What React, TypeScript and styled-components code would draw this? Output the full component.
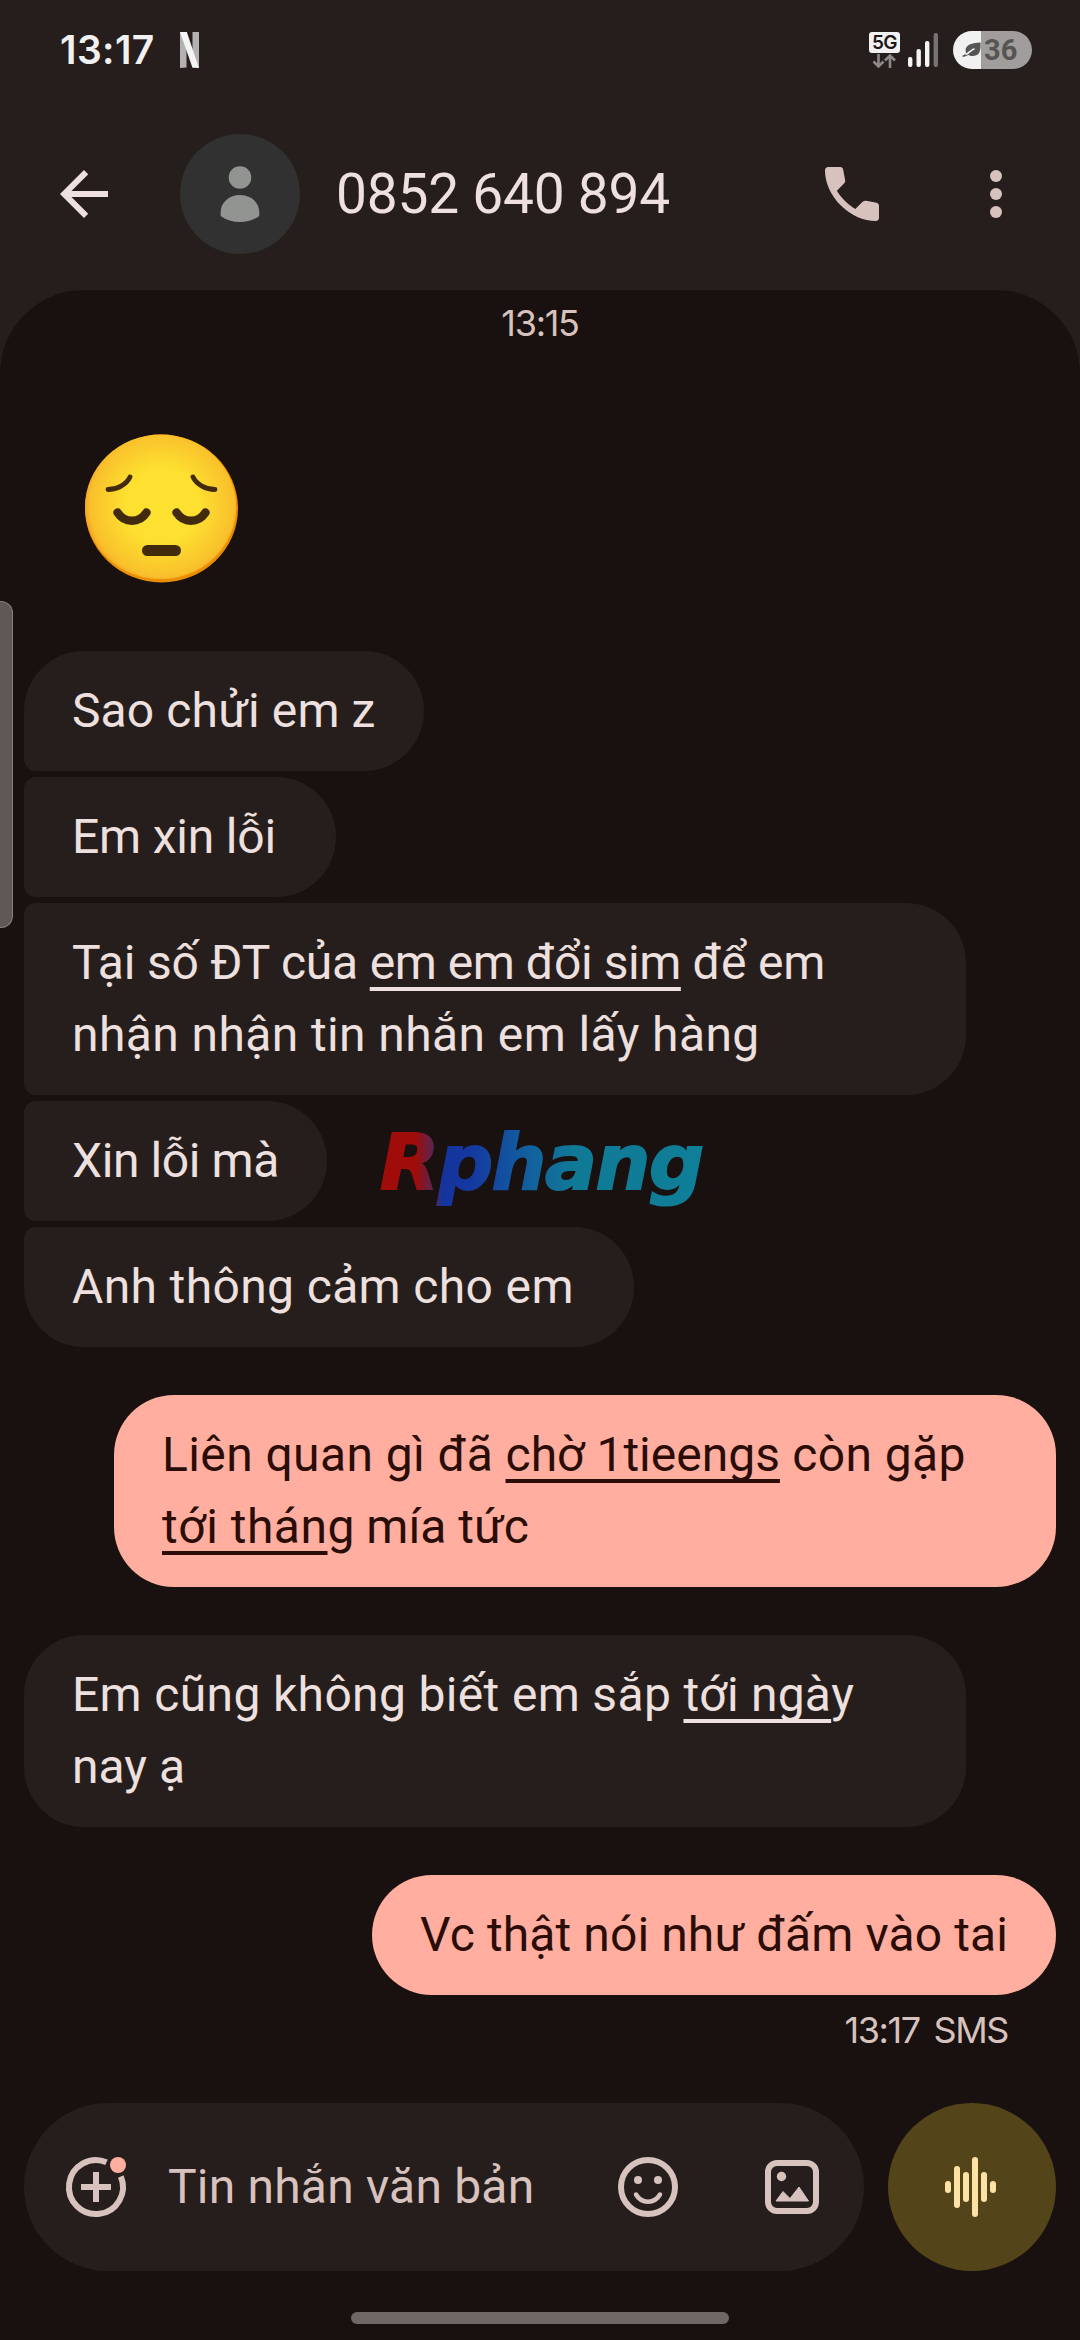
import React from 'react';
import styled, { createGlobalStyle, css } from 'styled-components';

const color = {
  background: '#19110f',
  surface: '#261e1d',
  text: '#ede0de',
  muted: '#d8c2be',
  accent: '#ffae9f',
  onAccent: '#2b0d08',
};

const GlobalStyle = createGlobalStyle`
  * { box-sizing: border-box; }
  body { margin: 0; background: ${color.background}; }
`;

const Screen = styled.div`
  position: relative;
  display: flex;
  flex-direction: column;
  width: 1080px;
  height: 2340px;
  overflow: hidden;
  background: ${color.surface};
  color: ${color.text};
  font-family: Roboto, 'Noto Sans', sans-serif;
`;

const StatusBar = styled.div`
  display: flex;
  align-items: center;
  height: 100px;
  padding: 0 48px 0 60px;
`;

const Clock = styled.span`
  width: 120px;
  font: 600 39px/46px Inter, sans-serif;
  letter-spacing: 0.4px;
  color: #f2f1f1;
`;

const StatusIcons = styled.div`
  display: flex;
  align-items: center;
  gap: 8px;
  margin-left: auto;
`;

const NetworkBlock = styled.div`
  display: flex;
  flex-direction: column;
  align-items: center;
  width: 31px;
`;

const NetworkBadge = styled.span`
  width: 31px;
  height: 21px;
  border-radius: 3px;
  background: #f2f1f1;
  color: #1c1716;
  font: 600 19px/21px Inter, sans-serif;
  letter-spacing: -0.6px;
  text-align: center;
`;

const Battery = styled.div`
  display: flex;
  align-items: center;
  width: 79px;
  height: 38px;
  margin-left: 6px;
  padding-left: 9px;
  border-radius: 19px;
  background: linear-gradient(90deg, #f2f1f1 28px, #a09d9c 28px);
`;

const BatteryLevel = styled.span`
  margin-left: 3px;
  font: 700 29px/38px Roboto, sans-serif;
  color: #575454;
`;

const Header = styled.header`
  display: flex;
  align-items: center;
  height: 190px;
  padding: 0 48px;
`;

const HeaderInner = styled.div`
  display: flex;
  align-items: center;
  width: 100%;
  height: 120px;
  margin-bottom: 2px;
`;

const Avatar = styled.div`
  display: grid;
  place-items: center;
  width: 120px;
  height: 120px;
  margin: 0 36px 0 60px;
  border-radius: 50%;
  background: #303130;
`;

const Title = styled.h1`
  flex: 1;
  margin: 0;
  font-weight: 400;
  font-size: 55px;
  line-height: 72px;
  letter-spacing: -0.2px;
`;

const Actions = styled.div`
  display: flex;
  gap: 72px;
`;

const Conversation = styled.main`
  display: flex;
  flex: 1;
  flex-direction: column;
  padding: 0 24px;
  border-radius: 84px 84px 0 0;
  background: ${color.background};
`;

const Stamp = styled.time<{ $end?: boolean }>`
  font: 400 36px/48px Inter, sans-serif;
  letter-spacing: -1.3px;
  color: ${color.muted};
  ${(p) =>
    p.$end
      ? css`
          align-self: flex-end;
          margin: 11px 48px 0 0;
          letter-spacing: -1.4px;
          word-spacing: 5px;
        `
      : css`
          align-self: center;
          margin-top: 9px;
          margin-bottom: 1px;
        `}
`;

const EmojiMessage = styled.div`
  display: flex;
  width: 160px;
  height: 160px;
  margin: 80px 0 63px 58px;
`;

const Thread = styled.section`
  display: flex;
  flex-direction: column;
  gap: 48px;
`;

const Group = styled.div<{ $sent?: boolean }>`
  display: flex;
  flex-direction: column;
  align-items: ${(p) => (p.$sent ? 'flex-end' : 'flex-start')};
  gap: 6px;
`;

const Bubble = styled.div<{ $sent?: boolean; $wide?: boolean }>`
  padding: 24px 48px;
  width: ${(p) => (p.$wide ? '942px' : 'auto')};
  border-radius: 60px;
  background: ${(p) => (p.$sent ? color.accent : color.surface)};
  color: ${(p) => (p.$sent ? color.onAccent : color.text)};
  &:not(:last-child) { border-bottom-left-radius: 12px; }
  &:not(:first-child) { border-top-left-radius: 12px; }
`;

const Line = styled.span<{ $track?: number }>`
  display: block;
  white-space: pre;
  font-size: 48px;
  line-height: 72px;
  letter-spacing: ${(p) => p.$track ?? 0}px;
`;

const Detected = styled.u<{ $track?: number }>`
  letter-spacing: ${(p) => p.$track ?? 0}px;
  text-decoration-thickness: 4px;
  text-underline-offset: 8px;
  text-decoration-skip-ink: none;
`;

const Composer = styled.footer`
  display: flex;
  gap: 24px;
  margin-top: auto;
`;

const InputPill = styled.div`
  display: flex;
  align-items: center;
  width: 840px;
  height: 168px;
  padding: 0 36px;
  border-radius: 84px;
  background: ${color.surface};
`;

const Placeholder = styled.span`
  flex: 1;
  margin-left: 36px;
  font-size: 48px;
  line-height: 72px;
  letter-spacing: 0.2px;
  color: ${color.muted};
`;

const PillIcons = styled.div`
  display: flex;
  gap: 72px;
`;

const VoiceButton = styled.div`
  display: grid;
  place-items: center;
  width: 168px;
  height: 168px;
  border-radius: 50%;
  background: #54441a;
`;

const NavHandle = styled.div`
  align-self: center;
  width: 378px;
  height: 12px;
  margin: 41px 0 16px;
  border-radius: 6px;
  background: #6f6666;
`;

const EdgePanelHandle = styled.div`
  position: absolute;
  left: 0;
  top: 601px;
  width: 13px;
  height: 327px;
  border: 1px solid #85807d;
  border-left: 0;
  border-radius: 0 12px 12px 0;
  background: #5e5955;
`;

const Watermark = styled.div`
  position: absolute;
  left: 380px;
  top: 1113px;
  padding: 0 12px 0 0;
  font: italic 700 77px/100px 'DejaVu Sans', sans-serif;
  letter-spacing: -1.4px;
  color: transparent;
  -webkit-text-stroke: 2px transparent;
  background: linear-gradient(90deg, #a00c0a 0 36px, #4d2a5e 56px, #14349c 62px, #1438a0 90px, #125aa0 140px, #107a96 195px, #0f7f98 100%);
  background-clip: text;
  -webkit-background-clip: text;
`;

const Icon = ({ size = 72, box = '0 0 72 72', children }: { size?: number; box?: string; children: React.ReactNode }) => (
  <svg width={size} height={size} viewBox={box} fill="none">
    {children}
  </svg>
);

const NetflixMark = () => (
  <svg width="19" height="36" viewBox="0 0 19 36">
    <path d="M0 0h6.500v35.500L0 36zM12.500 0H19v36l-6.500-.5z" fill="#b3b1b1" />
    <path d="M0 0h6.800L19 36l-6.600-.6z" fill="#f5f4f4" />
  </svg>
);

const DataArrows = () => (
  <svg width="25" height="16" viewBox="0 0 25 16" fill="none" stroke="#8d8989" strokeWidth="2.600">
    <path d="M6.500 1v12M1.500 8.500l5 5 5-5M18 15V3M13 7.500l5-5 5 5" />
  </svg>
);

const Signal = () => (
  <svg width="31" height="36" viewBox="0 0 31 36" fill="#f5f4f4">
    <rect x="0" y="25" width="4.400" height="10" rx="2" />
    <rect x="8.500" y="17" width="4.400" height="18" rx="2" />
    <rect x="17" y="9" width="4.400" height="26" rx="2" />
    <rect x="25.600" y="1" width="4.400" height="34" rx="2" fill="#787373" />
  </svg>
);

const Leaf = () => (
  <svg width="19" height="16" viewBox="0 0 19 16">
    <path d="M18.500.5C19 9 17.500 14 10.500 14c-2 0-3.300-.6-4.200-1.300C4.500 14 2.800 14.800.5 14.800c-.6-1.600 1.800-1.500 3.700-3.500C2 5 5.500 1.200 18.500.5z" fill="#575454" />
    <path d="M3.500 12.500C6.500 12 8.500 8 12.500 6.800" stroke="#f2f1f1" strokeWidth="1.700" fill="none" />
  </svg>
);

const Pensive = () => (
  <svg width="160" height="160" viewBox="82 428 160 160" fill="none">
    <defs>
      <radialGradient id="face" cx="162" cy="505" r="78" gradientUnits="userSpaceOnUse">
        <stop offset="0.480" stopColor="#fde030" />
        <stop offset="0.920" stopColor="#f9c02c" />
        <stop offset="1" stopColor="#f4a223" />
      </radialGradient>
    </defs>
    <ellipse cx="161.500" cy="508.500" rx="76.500" ry="74" fill="#eb8f00" />
    <ellipse cx="160.600" cy="506.800" rx="75.600" ry="72.300" fill="url(#face)" />
    <g stroke="#422b0d" strokeLinecap="round">
      <path d="M108 489.500c9 0 18.500-5 22-12.500M215 489.500c-9 0-18.500-5-22-12.500" strokeWidth="4.800" />
      <path d="M117.500 512.500c7 11 22 11 29 0M176.500 512.500c7 11 22 11 29 0" strokeWidth="8.500" />
      <path d="M147.500 550.500h28" strokeWidth="11" />
    </g>
  </svg>
);

const voiceBars = [
  [33, 12],
  [42, 42],
  [51, 30],
  [60, 60],
  [69, 30],
  [78, 12],
];

export default function App() {
  return (
    <Screen>
      <GlobalStyle />
      <StatusBar>
        <Clock>13:17</Clock>
        <NetflixMark />
        <StatusIcons>
          <NetworkBlock>
            <NetworkBadge>5G</NetworkBadge>
            <DataArrows />
          </NetworkBlock>
          <Signal />
          <Battery>
            <Leaf />
            <BatteryLevel>36</BatteryLevel>
          </Battery>
        </StatusIcons>
      </StatusBar>

      <Header>
        <HeaderInner>
          <Icon box="0 0 24 24">
            <path d="M20 11H7.830l5.590-5.590L12 4l-8 8 8 8 1.410-1.410L7.830 13H20v-2z" fill={color.text} />
          </Icon>
          <Avatar>
            <Icon size={60} box="0 0 60 60">
              <circle cx="30" cy="13.500" r="11.300" fill="#929492" />
              <path d="M10.700 52v-4c0-9.500 8.600-17 19.300-17s19.300 7.500 19.300 17v4c-5.500 4-12 6-19.300 6s-13.800-2-19.300-6z" fill="#929492" />
            </Icon>
          </Avatar>
          <Title>0852 640 894</Title>
          <Actions>
            <Icon box="0 0 24 24">
              <path d="M19.950 21q-3.125 0-6.175-1.362t-5.550-3.863-3.862-5.550T3 4.050q0-.45.3-.75t.75-.3H8.100q.35 0 .625.238t.325.562l.65 3.500q.05.4-.025.675T9.400 8.450L6.975 10.900q.5.925 1.187 1.787t1.513 1.663q.775.775 1.625 1.438T13.100 17l2.350-2.350q.225-.225.588-.337t.712-.063l3.450.7q.35.1.575.363T21 15.900v4.050q0 .45-.3.75t-.75.3z" fill={color.muted} />
            </Icon>
            <Icon>
              <circle cx="36" cy="18" r="6" fill={color.muted} />
              <circle cx="36" cy="36" r="6" fill={color.muted} />
              <circle cx="36" cy="54" r="6" fill={color.muted} />
            </Icon>
          </Actions>
        </HeaderInner>
      </Header>

      <Conversation>
        <Stamp>13:15</Stamp>
        <EmojiMessage>
          <Pensive />
        </EmojiMessage>
        <Thread>
          <Group>
            <Bubble>
              <Line $track={0.120}>Sao chửi em z</Line>
            </Bubble>
            <Bubble>
              <Line $track={-0.200}>{'Em xin lỗi '}</Line>
            </Bubble>
            <Bubble $wide>
              <Line $track={-0.200}>
                Tại số ĐT của <Detected $track={-0.460}>em em đổi sim</Detected> để em
              </Line>
              <Line $track={0.400}>nhận nhận tin nhắn em lấy hàng</Line>
            </Bubble>
            <Bubble>
              <Line $track={-0.400}>Xin lỗi mà</Line>
            </Bubble>
            <Bubble>
              <Line $track={0.360}>{'Anh thông cảm cho em '}</Line>
            </Bubble>
          </Group>
          <Group $sent>
            <Bubble $sent $wide>
              <Line $track={0.400}>
                Liên quan gì đã <Detected>chờ 1tieengs</Detected> còn gặp
              </Line>
              <Line>
                <Detected $track={0.500}>tới thán</Detected>g mía tức
              </Line>
            </Bubble>
          </Group>
          <Group>
            <Bubble $wide>
              <Line $track={0.340}>
                Em cũng không biết em sắp <Detected $track={0.200}>tới ngà</Detected>y
              </Line>
              <Line>nay ạ</Line>
            </Bubble>
          </Group>
          <Group $sent>
            <Bubble $sent>
              <Line $track={0.110}>Vc thật nói như đấm vào tai</Line>
            </Bubble>
          </Group>
        </Thread>
        <Stamp $end>13:17 SMS</Stamp>

        <Composer>
          <InputPill>
            <Icon>
              <path d="M46.500 11.200A27 27 0 1 0 60.800 25.500" stroke={color.muted} strokeWidth="6" />
              <path d="M36 21v30M21 36h30" stroke={color.muted} strokeWidth="6" />
              <circle cx="58" cy="14" r="8" fill={color.accent} />
            </Icon>
            <Placeholder>Tin nhắn văn bản</Placeholder>
            <PillIcons>
              <Icon>
                <circle cx="36" cy="36" r="27" stroke={color.muted} strokeWidth="6" />
                <circle cx="26" cy="29" r="4" fill={color.muted} />
                <circle cx="46" cy="29" r="4" fill={color.muted} />
                <path d="M24 43.500c5.500 9.500 18.500 9.500 24 0" stroke={color.muted} strokeWidth="4.500" strokeLinecap="round" />
              </Icon>
              <Icon>
                <rect x="12" y="12" width="48" height="48" rx="9" stroke={color.muted} strokeWidth="6" />
                <circle cx="25.500" cy="25.500" r="4.700" fill={color.muted} />
                <path d="M20 50l7-9.500 7 7 9-11.500 9.500 14z" fill={color.muted} stroke={color.muted} strokeLinejoin="round" />
              </Icon>
            </PillIcons>
          </InputPill>
          <VoiceButton>
            <Icon size={108} box="0 0 108 108">
              {voiceBars.map(([x, h]) => (
                <rect key={x} x={x - 6} y={54 - h / 2} width="6" height={h} rx="3" fill="#fde2a5" />
              ))}
            </Icon>
          </VoiceButton>
        </Composer>
        <NavHandle />
      </Conversation>

      <EdgePanelHandle />
      <Watermark>Rphang</Watermark>
    </Screen>
  );
}
